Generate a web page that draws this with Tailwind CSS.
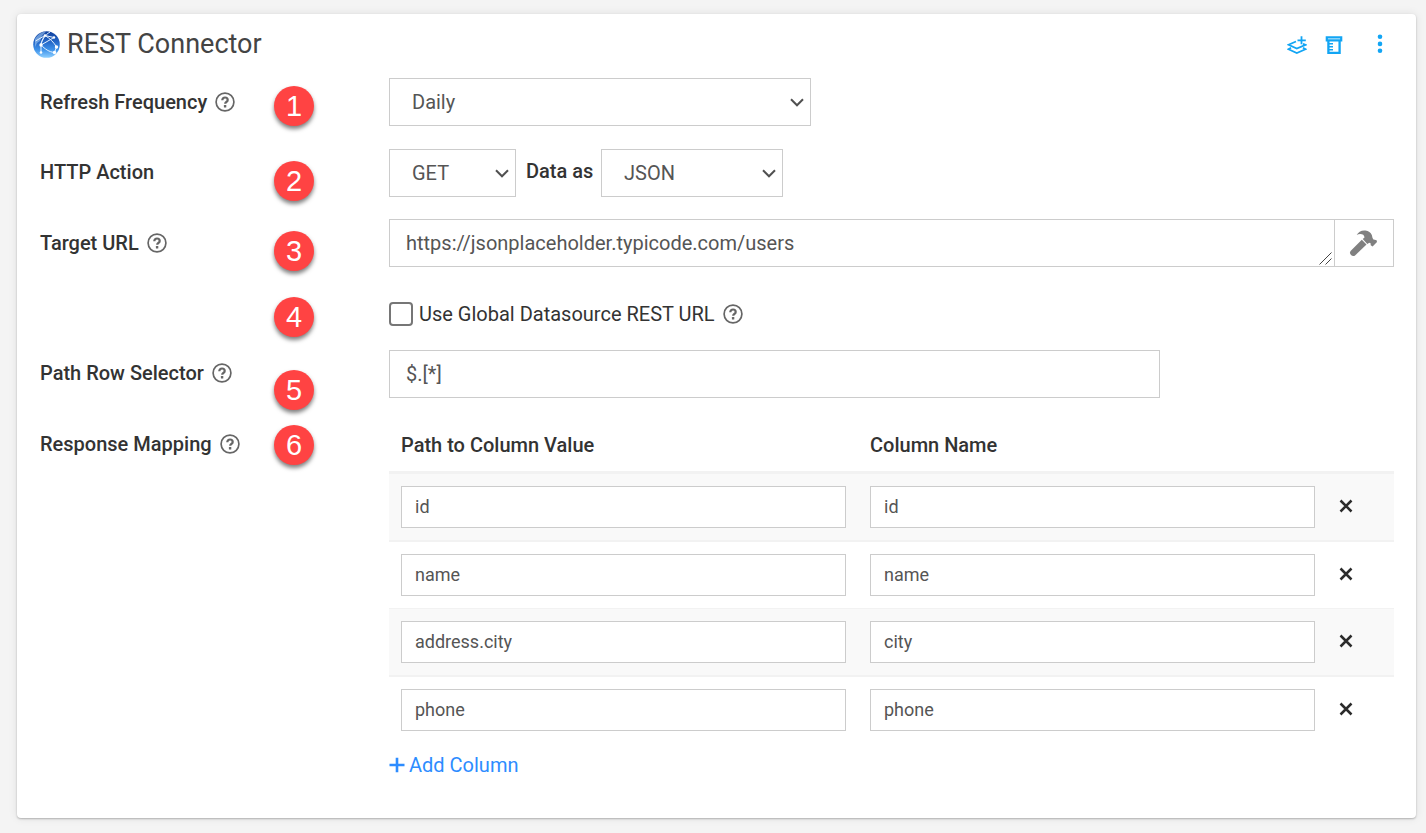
<!DOCTYPE html>
<html lang="en">
<head>
<meta charset="utf-8">
<meta name="viewport" content="width=device-width, initial-scale=1">
<title>REST Connector</title>
<script src="https://cdn.jsdelivr.net/npm/@tailwindcss/browser@4"></script>
</head>
<body class="bg-[#f4f4f4] pt-[14px] pr-[10px] pb-[15px] pl-[17px] font-[Roboto,sans-serif] text-xl text-[#333]">
<svg class="hidden" aria-hidden="true">
  <symbol id="help" viewBox="0 0 20 20">
    <circle cx="10" cy="10" r="8.9" fill="none" stroke="#666" stroke-width="1.700"/>
    <path d="M7.3 8.2C7.3 6.5 8.4 5.5 10 5.5s2.7 1 2.7 2.4c0 1.1-.6 1.6-1.4 2.1-.8.5-1.1.8-1.1 1.7" fill="none" stroke="#666" stroke-width="2.200"/>
    <rect x="8.9" y="13" width="2.4" height="2.4" rx=".5" fill="#666"/>
  </symbol>
  <symbol id="chevron" viewBox="0 0 14 9"><path d="M1 1.3l6 6 6-6" fill="none" stroke="#505050" stroke-width="2"/></symbol>
  <symbol id="cross" viewBox="0 0 14 14"><path d="M1.500 1.500l11 11M12.500 1.500l-11 11" fill="none" stroke="#2b2b2b" stroke-width="2.500"/></symbol>
</svg>

<main class="rounded bg-white pb-[31px] shadow-[0_1px_2px_rgba(0,0,0,0.25),0_0_10px_rgba(0,0,0,0.09)]">
  <header class="flex h-16 items-start justify-between pt-3 pr-8 pl-4">
    <div class="flex h-9 items-center gap-1.5">
      <svg class="size-7 shrink-0" viewBox="0 0 28 28" aria-hidden="true">
        <defs>
          <linearGradient id="sea" x1="0" y1="0" x2="0" y2="1"><stop offset="0" stop-color="#103f9c"/><stop offset=".4" stop-color="#2467c8"/><stop offset=".7" stop-color="#3f93ea"/><stop offset="1" stop-color="#8fd0ff"/></linearGradient>
        </defs>
        <circle cx="13.500" cy="14.500" r="13.300" fill="url(#sea)"/>
        <path d="M2 9c3-5 7-7.500 11-7.500L9 6l-2 5-3 2-2 4z" fill="#a8d0f5" opacity=".55"/>
        <g fill="none" stroke="#e4f1ff" stroke-width="1">
          <path d="M2.500 11L12 5.500l9 2M12 5.500c-3 5-4.500 8-4 9.500M12 5.500c5 3 9 7 11.500 11.500M17 2c-5 3-8 7-9 13M8 15l13-7.500M8 15c4 4 8 7 13.500 7.500M8 15v7.500M23.500 17l-2 5.500"/>
        </g>
        <g fill="#fff"><circle cx="12" cy="5.500" r="1.300"/><circle cx="8" cy="15" r="1.700"/><circle cx="21" cy="7.500" r="1.200"/><circle cx="23.500" cy="17" r="1.700"/><circle cx="21.500" cy="22.500" r="1.700"/><circle cx="8" cy="22.500" r="1.300"/></g>
      </svg>
      <h1 class="text-[27px] leading-9 text-[#444]">REST Connector</h1>
    </div>
    <div class="flex items-center pt-[7px]">
      <button type="button" aria-label="Add to dataset" class="mr-[18px] flex h-6 w-5 items-center">
        <svg class="h-5 w-5" viewBox="0 0 20 20" fill="none" stroke="#12a5f4" stroke-width="1.800"><path d="M9 6.500L1.500 9.800l8.300 3.700 8.700-3.700-2.500-.9M4 12.800l-2.500 1.400 8.300 3.800 8.700-3.800-2.500-1.400M14.500 1.300v8M10.500 5.300h8.300"/></svg>
      </button>
      <button type="button" aria-label="Samples" class="mr-[33px] flex h-6 w-[18px] items-center">
        <svg class="h-5 w-[18px]" viewBox="0 0 18 20" fill="none" stroke="#12a5f4"><path d="M1.800 2.300h14.400v3H1.800z" stroke-width="2.200"/><path d="M3.400 5v12.800h11.200V5" stroke-width="2.300"/><path d="M4 8.700h4M4 11.700h4M4 14.700h4" stroke-width="1.600"/></svg>
      </button>
      <button type="button" aria-label="More options" class="flex h-6 w-2 items-start">
        <svg class="h-5 w-2" viewBox="0 0 8 20" fill="#12a5f4"><circle cx="4" cy="3.700" r="2.300"/><circle cx="4" cy="10.900" r="2.300"/><circle cx="4" cy="17.700" r="2.300"/></svg>
      </button>
    </div>
  </header>

  <form class="pr-[22px] pl-[23px]">
    <div class="mb-[23px] grid h-12 grid-cols-[234px_115px_1fr] items-start">
      <div class="flex h-12 items-center gap-2"><label for="freq" class="font-medium">Refresh Frequency</label><svg class="size-5"><use href="#help"/></svg></div>
      <span class="mt-2 flex size-10 items-center justify-center rounded-full bg-[#ff4343] font-['Liberation_Sans',sans-serif] text-[29px] text-white shadow-[0_3px_4px_rgba(0,0,0,0.5)]">1</span>
      <div class="relative w-[422px] max-w-full">
        <select id="freq" class="h-12 w-full appearance-none border border-[#ccc] bg-white pl-[22px] text-[#555]"><option>Daily</option></select>
        <svg class="pointer-events-none absolute top-5 right-[7px] h-[9px] w-3.5"><use href="#chevron"/></svg>
      </div>
    </div>

    <div class="mb-[22px] grid h-12 grid-cols-[234px_115px_1fr] items-start">
      <label for="verb" class="font-medium leading-[46px]">HTTP Action</label>
      <span class="mt-3 flex size-10 items-center justify-center rounded-full bg-[#ff4343] font-['Liberation_Sans',sans-serif] text-[29px] text-white shadow-[0_3px_4px_rgba(0,0,0,0.5)]">2</span>
      <div class="flex items-start">
        <div class="relative w-[127px]">
          <select id="verb" class="h-12 w-full appearance-none border border-[#ccc] bg-white pl-[22px] text-[#555]"><option>GET</option></select>
          <svg class="pointer-events-none absolute top-5 right-[7px] h-[9px] w-3.5"><use href="#chevron"/></svg>
        </div>
        <label for="format" class="w-[85px] pl-[10px] font-medium leading-11">Data as</label>
        <div class="relative w-[182px]">
          <select id="format" class="h-12 w-full appearance-none border border-[#ccc] bg-white pl-[22px] text-[#555]"><option>JSON</option></select>
          <svg class="pointer-events-none absolute top-5 right-[7px] h-[9px] w-3.5"><use href="#chevron"/></svg>
        </div>
      </div>
    </div>

    <div class="mb-[23px] grid h-12 grid-cols-[234px_115px_1fr] items-start">
      <div class="flex h-12 items-center gap-2"><label for="url" class="font-medium">Target URL</label><svg class="size-5"><use href="#help"/></svg></div>
      <span class="mt-3 flex size-10 items-center justify-center rounded-full bg-[#ff4343] font-['Liberation_Sans',sans-serif] text-[29px] text-white shadow-[0_3px_4px_rgba(0,0,0,0.5)]">3</span>
      <div class="flex items-start">
        <div class="relative h-12 min-w-0 flex-1">
          <textarea id="url" rows="1" class="block h-12 w-full resize-none overflow-hidden border border-r-0 border-[#ccc] bg-white px-4 py-[9px] leading-7 text-[#555]">https://jsonplaceholder.typicode.com/users</textarea>
          <svg class="pointer-events-none absolute right-0.5 bottom-0.5 size-[13px]" viewBox="0 0 13 13" aria-hidden="true"><path d="M.5 12.500l12-12M6.500 12.500l6-6" stroke="#444" stroke-width="1"/></svg>
        </div>
        <button type="button" aria-label="Build URL" class="flex h-12 w-[60px] items-center justify-center border border-[#ccc] bg-white pr-0.5">
          <svg class="h-7 w-7" viewBox="0 0 28 28" fill="#808080"><path d="M12.800 10.800l4.700 4.700L6.300 26.200a3.200 3.200 0 0 1-4.500-4.500z"/><path d="M13.700 10l1.800-1.600c-.2-2.200-1.700-3.400-4.300-3.400-1.300 0-2.400.4-3.500 1C9.300 2.800 12.500 1 16.500 1.500c3 .4 5.300 2 6.300 4.600.5 1.500.4 3 1.600 4.300l1.300.3 1.900.5.4 1.900-4.400 4.300-1.900-1.200-.1-1.900-1.300-.6-2 1.300z"/></svg>
        </button>
      </div>
    </div>

    <div class="mb-3 grid h-12 grid-cols-[234px_115px_1fr] items-start">
      <span></span>
      <span class="mt-[7px] flex size-10 items-center justify-center rounded-full bg-[#ff4343] font-['Liberation_Sans',sans-serif] text-[29px] text-white shadow-[0_3px_4px_rgba(0,0,0,0.5)]">4</span>
      <div class="flex h-12 items-center">
        <input id="global" type="checkbox" class="mr-1.5 size-6 appearance-none rounded-[4px] border-2 border-[#767676] bg-white checked:bg-[#2d8cff]">
        <label for="global" class="mr-2">Use Global Datasource REST URL</label><svg class="size-5"><use href="#help"/></svg>
      </div>
    </div>

    <div class="mb-[23px] grid h-12 grid-cols-[234px_115px_1fr] items-start">
      <div class="flex h-[46px] items-center gap-2"><label for="path" class="font-medium">Path Row Selector</label><svg class="size-5"><use href="#help"/></svg></div>
      <span class="mt-5 flex size-10 items-center justify-center rounded-full bg-[#ff4343] font-['Liberation_Sans',sans-serif] text-[29px] text-white shadow-[0_3px_4px_rgba(0,0,0,0.5)]">5</span>
      <input id="path" type="text" value="$.[*]" class="h-12 w-[771px] max-w-full border border-[#ccc] bg-white px-4 text-[#555]">
    </div>

    <div class="grid grid-cols-[234px_115px_1fr] items-start">
      <div class="flex h-[46px] items-center gap-2"><span id="mapping" class="font-medium">Response Mapping</span><svg class="size-5"><use href="#help"/></svg></div>
      <span class="mt-1 flex size-10 items-center justify-center rounded-full bg-[#ff4343] font-['Liberation_Sans',sans-serif] text-[29px] text-white shadow-[0_3px_4px_rgba(0,0,0,0.5)]">6</span>
      <div>
        <table aria-labelledby="mapping" class="w-full table-fixed border-separate border-spacing-0 text-lg">
          <thead>
            <tr class="h-[50px] text-left text-xl">
              <th scope="col" class="px-3 pt-0 pb-0.5 font-medium">Path to Column Value</th>
              <th scope="col" class="px-3 pt-0 pb-0.5 font-medium">Column Name</th>
              <th class="w-[67px] p-0"></th>
            </tr>
          </thead>
          <tbody>
            <tr class="bg-[#f9f9f9]">
              <td class="border-t-3 border-[#f2f2f2] p-3"><input aria-label="Path to Column Value 1" value="id" class="block h-[42px] w-full border border-[#ccc] bg-white px-[13px] pb-0.5 text-[#555]"></td>
              <td class="border-t-3 border-[#f2f2f2] p-3"><input aria-label="Column Name 1" value="id" class="block h-[42px] w-full border border-[#ccc] bg-white px-[13px] pb-0.5 text-[#555]"></td>
              <td class="border-t-3 border-[#f2f2f2] px-3 pt-0 pb-0.5"><button type="button" aria-label="Remove row 1" class="block"><svg class="size-3.5"><use href="#cross"/></svg></button></td>
            </tr>
            <tr>
              <td class="border-t-2 border-[#f2f2f2] p-3"><input aria-label="Path to Column Value 2" value="name" class="block h-[42px] w-full border border-[#ccc] bg-white px-[13px] pb-0.5 text-[#555]"></td>
              <td class="border-t-2 border-[#f2f2f2] p-3"><input aria-label="Column Name 2" value="name" class="block h-[42px] w-full border border-[#ccc] bg-white px-[13px] pb-0.5 text-[#555]"></td>
              <td class="border-t-2 border-[#f2f2f2] px-3 pt-0 pb-0.5"><button type="button" aria-label="Remove row 2" class="block"><svg class="size-3.5"><use href="#cross"/></svg></button></td>
            </tr>
            <tr class="bg-[#f9f9f9]">
              <td class="border-t border-[#f2f2f2] p-3"><input aria-label="Path to Column Value 3" value="address.city" class="block h-[42px] w-full border border-[#ccc] bg-white px-[13px] pb-0.5 text-[#555]"></td>
              <td class="border-t border-[#f2f2f2] p-3"><input aria-label="Column Name 3" value="city" class="block h-[42px] w-full border border-[#ccc] bg-white px-[13px] pb-0.5 text-[#555]"></td>
              <td class="border-t border-[#f2f2f2] px-3 pt-0 pb-0.5"><button type="button" aria-label="Remove row 3" class="block"><svg class="size-3.5"><use href="#cross"/></svg></button></td>
            </tr>
            <tr>
              <td class="border-t-2 border-[#f2f2f2] p-3"><input aria-label="Path to Column Value 4" value="phone" class="block h-[42px] w-full border border-[#ccc] bg-white px-[13px] pb-0.5 text-[#555]"></td>
              <td class="border-t-2 border-[#f2f2f2] p-3"><input aria-label="Column Name 4" value="phone" class="block h-[42px] w-full border border-[#ccc] bg-white px-[13px] pb-0.5 text-[#555]"></td>
              <td class="border-t-2 border-[#f2f2f2] px-3 pt-0 pb-0.5"><button type="button" aria-label="Remove row 4" class="block"><svg class="size-3.5"><use href="#cross"/></svg></button></td>
            </tr>
          </tbody>
        </table>
        <a href="#" class="flex h-11 w-fit items-center gap-1 text-[#2d8cff]"><svg class="size-4" viewBox="0 0 16 16" aria-hidden="true"><path d="M8 .7v14.600M.5 8h15" stroke="#2d8cff" stroke-width="2.600"/></svg>Add Column</a>
      </div>
    </div>
  </form>
</main>
</body>
</html>
